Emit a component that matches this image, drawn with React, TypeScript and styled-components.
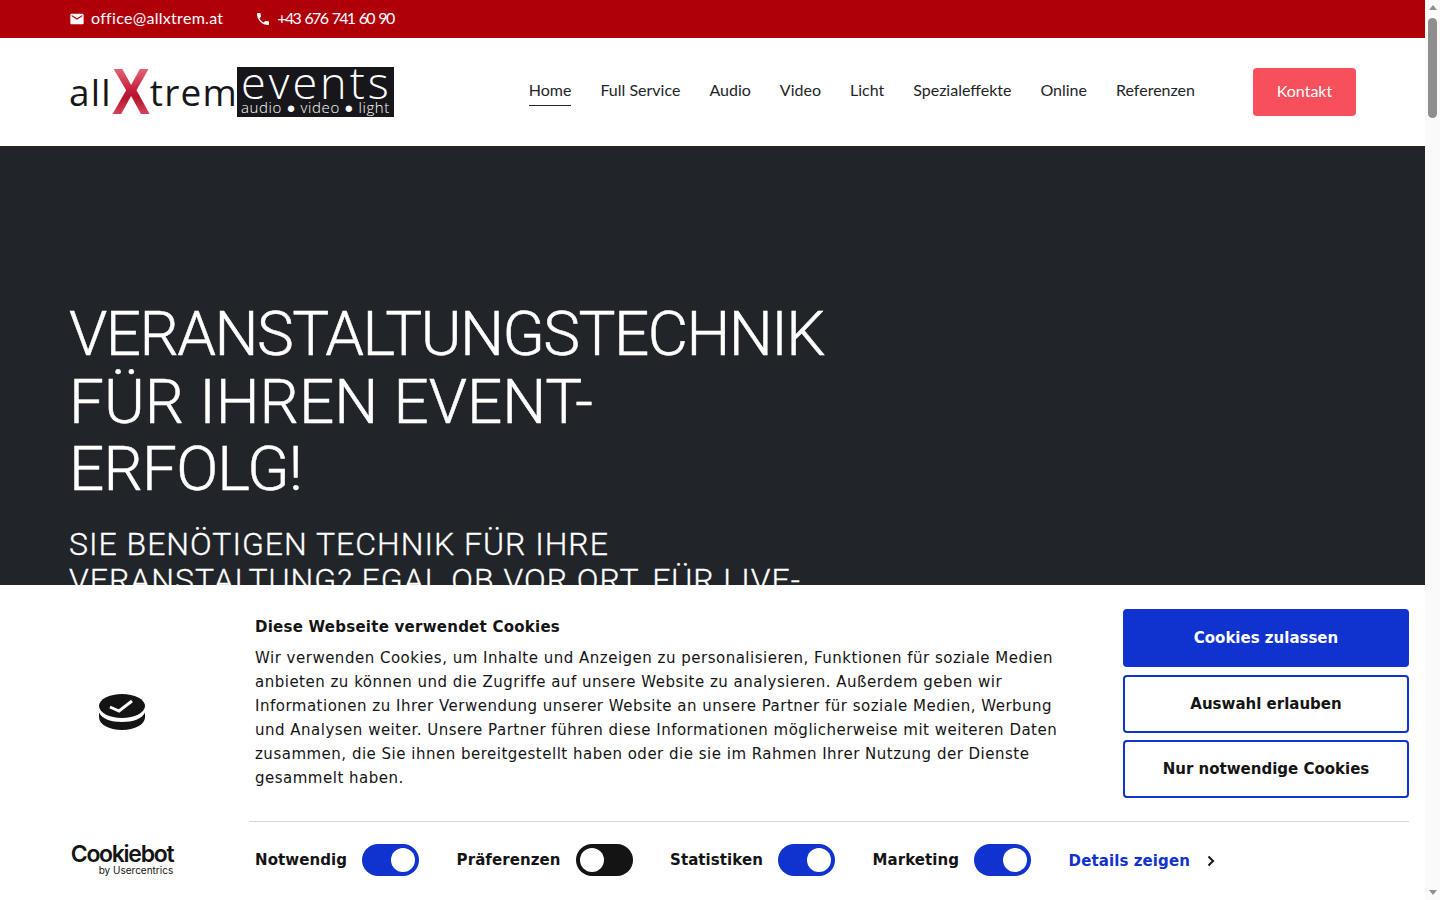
import { FC } from "react";
import styled, { createGlobalStyle } from "styled-components";
import { MdEmail, MdPhone } from "react-icons/md";

const BLUE = "#1032cf";
const INK = "#141414";
const PAGE_FONT = '"Lato", "Open Sans", sans-serif';
const HERO_FONT = '"Roboto", "Open Sans", sans-serif';
const COOKIE_FONT = '"DejaVu Sans", Verdana, sans-serif';

const GlobalStyle = createGlobalStyle`
    body {
        margin: 0;
        background: #fff;
        color: #212529;
        font-family: ${PAGE_FONT};
    }
`;

const Page = styled.div`
    display: flex;
    flex-direction: column;
    height: 100vh;
    margin-right: 15px;
    overflow: hidden;
`;

const TopBar = styled.div`
    display: flex;
    flex: none;
    align-items: center;
    gap: 32px;
    height: 38px;
    padding: 0 69px;
    background: #af0009;
    color: #fff;
    font-size: 16px;
`;

const TopItem = styled.a<{ $tracking: number; $wordGap?: number }>`
    display: flex;
    align-items: center;
    gap: 6px;
    color: #fff;
    letter-spacing: ${({ $tracking }) => $tracking}px;
    word-spacing: ${({ $wordGap }) => $wordGap ?? 0}px;

    span {
        margin-top: -3px;
    }

    svg {
        width: 16px;
        height: 16px;
    }
`;

const Header = styled.header`
    display: flex;
    flex: none;
    align-items: center;
    justify-content: space-between;
    height: 108px;
    padding: 0 69px;
    background: #fff;
`;

const Logo = styled.div`
    display: flex;
    align-items: center;
    height: 50px;
`;

const LogoWord = styled.span`
    font-family: "Open Sans", sans-serif;
    font-size: 37px;
    font-weight: 500;
    line-height: 50px;
    letter-spacing: 1.2px;
    color: #17171b;
`;

const LogoX = styled.span`
    display: inline-block;
    width: 43px;
    height: 50px;
    margin-right: -5px;
    transform: scaleX(0.88);
    transform-origin: left center;
    font-family: "Liberation Sans", sans-serif;
    font-size: 65px;
    font-weight: 700;
    line-height: 50px;
    background: linear-gradient(180deg, #e56a7c 0%, #c6203c 45%, #b3142d 60%, #dc4a62 100%);
    -webkit-background-clip: text;
    background-clip: text;
    color: transparent;
`;

const LogoBox = styled.div`
    display: flex;
    flex-direction: column;
    width: 157px;
    height: 50px;
    margin-left: -1px;
    padding-left: 4px;
    box-sizing: border-box;
    background: #17171b;
    color: #fff;
    font-family: "Open Sans", sans-serif;
    font-weight: 300;
`;

const LogoEvents = styled.span`
    font-size: 45px;
    line-height: 29px;
    letter-spacing: 3px;
`;

const LogoSub = styled.span`
    margin-top: 2px;
    font-size: 15px;
    line-height: 19px;
    letter-spacing: 0.6px;
    white-space: nowrap;
`;

const NavArea = styled.div`
    display: flex;
    align-items: center;
    gap: 58px;
`;

const Nav = styled.nav`
    display: flex;
    align-items: center;
    gap: 29px;
`;

const NavLink = styled.a<{ $active?: boolean }>`
    padding: 4px 0 3px;
    margin-top: -5px;
    font-size: 16px;
    line-height: 24px;
    color: #212529;
    border-bottom: 1px solid ${({ $active }) => ($active ? "#212529" : "transparent")};
`;

const ContactButton = styled.a`
    display: flex;
    align-items: center;
    justify-content: center;
    width: 103px;
    height: 45px;
    padding-bottom: 3px;
    border-radius: 4px;
    background: #f74f5c;
    color: #fff;
    font-size: 16px;
`;

const Hero = styled.section`
    flex: 1;
    padding: 154px 69px 0;
    background: #212529;
    color: #fff;
    font-family: ${HERO_FONT};
`;

const HeroTitle = styled.h1`
    display: flex;
    flex-direction: column;
    margin: 0 0 23px;
    font-size: 62px;
    font-weight: 300;
    line-height: 67.5px;
    -webkit-text-stroke: 0.5px #fff;
`;

const HeroLine = styled.span<{ $tracking: number }>`
    letter-spacing: ${({ $tracking }) => $tracking}px;
`;

const HeroLead = styled.h2`
    max-width: 760px;
    margin: 0;
    font-size: 32px;
    font-weight: 300;
    line-height: 36px;
    letter-spacing: 1px;
    -webkit-text-stroke: 0.3px #fff;
`;

const Dialog = styled.div`
    position: fixed;
    left: 0;
    right: 15px;
    bottom: 0;
    display: flex;
    height: 315px;
    box-sizing: border-box;
    padding: 24px 16px 0 0;
    background: #fff;
    color: ${INK};
    font-family: ${COOKIE_FONT};
`;

const Brand = styled.div`
    display: flex;
    flex: 0 0 249px;
    flex-direction: column;
    align-items: center;
    justify-content: space-between;
    padding: 85px 5px 24px 0;
    box-sizing: border-box;
`;

const CookieIcon = styled.svg`
    width: 46px;
    height: 36px;
`;

const Wordmark = styled.div`
    display: flex;
    flex-direction: column;
    align-items: flex-end;
    font-family: "Inter", sans-serif;
    color: #141414;
`;

const WordmarkMain = styled.span`
    font-size: 23px;
    font-weight: 600;
    line-height: 22px;
    letter-spacing: -1.3px;
`;

const WordmarkSub = styled.span`
    margin-top: -1px;
    font-size: 10px;
    line-height: 12px;
`;

const Main = styled.div`
    display: flex;
    flex: 1;
    flex-direction: column;
    min-width: 0;
`;

const TopRow = styled.div`
    display: flex;
    justify-content: space-between;
    padding-bottom: 23px;
    border-bottom: 1px solid #d6d6d6;
`;

const Copy = styled.div`
    width: 810px;
    padding: 8px 0 0 6px;
`;

const CopyTitle = styled.div`
    margin-bottom: 9px;
    font-size: 15px;
    font-weight: 700;
    line-height: 20px;
    letter-spacing: 0.25px;
`;

const CopyBody = styled.p`
    margin: 0;
    font-size: 15px;
    line-height: 24px;
    letter-spacing: 0.5px;
`;

const Actions = styled.div`
    display: flex;
    flex: 0 0 286px;
    flex-direction: column;
    gap: 7.5px;
`;

const ActionButton = styled.button<{ $primary?: boolean }>`
    height: 58px;
    border: 2px solid ${BLUE};
    border-radius: 4px;
    background: ${({ $primary }) => ($primary ? BLUE : "#fff")};
    color: ${({ $primary }) => ($primary ? "#fff" : INK)};
    font-family: ${COOKIE_FONT};
    font-size: 15px;
    font-weight: 700;
`;

const BottomRow = styled.div`
    display: flex;
    align-items: center;
    height: 32px;
    padding: 22px 0 0 6px;
`;

const Consent = styled.div`
    display: flex;
    align-items: center;
    gap: 15.25px;
    margin-right: 37.25px;
`;

const ConsentLabel = styled.span`
    margin-top: -1px;
    font-size: 15px;
    font-weight: 700;
    letter-spacing: 0.08px;
`;

const Toggle = styled.span<{ $on: boolean }>`
    display: flex;
    justify-content: ${({ $on }) => ($on ? "flex-end" : "flex-start")};
    width: 57px;
    height: 32px;
    padding: 4px;
    box-sizing: border-box;
    border-radius: 16px;
    background: ${({ $on }) => ($on ? BLUE : INK)};

    &::after {
        content: "";
        width: 24px;
        height: 24px;
        border-radius: 50%;
        background: #fff;
    }
`;

const DetailsLink = styled.a`
    display: flex;
    align-items: center;
    gap: 17px;
    margin-top: 1px;
    color: ${BLUE};
    font-size: 15px;
    font-weight: 700;
    letter-spacing: 0.1px;
`;

const ScrollRail = styled.div`
    position: fixed;
    top: 0;
    right: 0;
    bottom: 0;
    display: flex;
    flex-direction: column;
    align-items: center;
    width: 15px;
    padding: 5px 0;
    box-sizing: border-box;
    background: #fafafa;
`;

const ScrollArrow = styled.span<{ $down?: boolean }>`
    width: 0;
    height: 0;
    border-left: 4.5px solid transparent;
    border-right: 4.5px solid transparent;
    ${({ $down }) => ($down ? "border-top: 5px solid #8f8f8f; margin-top: auto;" : "border-bottom: 5px solid #8f8f8f;")}
`;

const ScrollThumb = styled.span`
    width: 9px;
    height: 100px;
    margin-top: 8px;
    border-radius: 5px;
    background: #8f8f8f;
`;

const navItems = ["Home", "Full Service", "Audio", "Video", "Licht", "Spezialeffekte", "Online", "Referenzen"];

const consents = [
    { label: "Notwendig", on: true },
    { label: "Präferenzen", on: false },
    { label: "Statistiken", on: true },
    { label: "Marketing", on: true },
];

const CookieDialog: FC = () => (
    <Dialog>
        <Brand>
            <CookieIcon viewBox="0 0 46 36">
                <ellipse cx="23" cy="12" rx="23" ry="12" fill="#141414" />
                <path d="M0 18.5 C3 25 12 28 23 28 C34 28 43 25 46 18.5 L46 23 C46 30.5 36 36 23 36 C10 36 0 30.5 0 23 Z" fill="#141414" />
                <path d="M11 13 L20 17 L33 7" fill="none" stroke="#fff" strokeWidth="3" />
            </CookieIcon>
            <Wordmark>
                <WordmarkMain>Cookiebot</WordmarkMain>
                <WordmarkSub>by Usercentrics</WordmarkSub>
            </Wordmark>
        </Brand>
        <Main>
            <TopRow>
                <Copy>
                    <CopyTitle>Diese Webseite verwendet Cookies</CopyTitle>
                    <CopyBody>
                        Wir verwenden Cookies, um Inhalte und Anzeigen zu personalisieren, Funktionen für soziale Medien
                        anbieten zu können und die Zugriffe auf unsere Website zu analysieren. Außerdem geben wir
                        Informationen zu Ihrer Verwendung unserer Website an unsere Partner für soziale Medien, Werbung
                        und Analysen weiter. Unsere Partner führen diese Informationen möglicherweise mit weiteren Daten
                        zusammen, die Sie ihnen bereitgestellt haben oder die sie im Rahmen Ihrer Nutzung der Dienste
                        gesammelt haben.
                    </CopyBody>
                </Copy>
                <Actions>
                    <ActionButton $primary>Cookies zulassen</ActionButton>
                    <ActionButton>Auswahl erlauben</ActionButton>
                    <ActionButton>Nur notwendige Cookies</ActionButton>
                </Actions>
            </TopRow>
            <BottomRow>
                {consents.map(({ label, on }) => (
                    <Consent key={label}>
                        <ConsentLabel>{label}</ConsentLabel>
                        <Toggle $on={on} />
                    </Consent>
                ))}
                <DetailsLink>
                    Details zeigen
                    <svg width="8" height="12" viewBox="0 0 8 12">
                        <path d="M1.5 1.5 L6 6 L1.5 10.5" fill="none" stroke={INK} strokeWidth="2" />
                    </svg>
                </DetailsLink>
            </BottomRow>
        </Main>
    </Dialog>
);

const App: FC = () => (
    <>
        <GlobalStyle />
        <Page>
            <TopBar>
                <TopItem $tracking={0.3}><MdEmail /><span>office@allxtrem.at</span></TopItem>
                <TopItem $tracking={-1.7} $wordGap={2}><MdPhone /><span>+43 676 741 60 90</span></TopItem>
            </TopBar>
            <Header>
                <Logo>
                    <LogoWord>all</LogoWord>
                    <LogoX>X</LogoX>
                    <LogoWord>trem</LogoWord>
                    <LogoBox>
                        <LogoEvents>events</LogoEvents>
                        <LogoSub>audio ● video ● light</LogoSub>
                    </LogoBox>
                </Logo>
                <NavArea>
                    <Nav>
                        {navItems.map((item, i) => (
                            <NavLink key={item} $active={i === 0}>{item}</NavLink>
                        ))}
                    </Nav>
                    <ContactButton>Kontakt</ContactButton>
                </NavArea>
            </Header>
            <Hero>
                <HeroTitle>
                    <HeroLine $tracking={-1.55}>VERANSTALTUNGSTECHNIK</HeroLine>
                    <HeroLine $tracking={0}>FÜR IHREN EVENT-</HeroLine>
                    <HeroLine $tracking={-0.8}>ERFOLG!</HeroLine>
                </HeroTitle>
                <HeroLead>
                    SIE BENÖTIGEN TECHNIK FÜR IHRE VERANSTALTUNG? EGAL OB VOR ORT, FÜR LIVE-STREAMING ODER HYBRID.
                </HeroLead>
            </Hero>
        </Page>
        <CookieDialog />
        <ScrollRail>
            <ScrollArrow />
            <ScrollThumb />
            <ScrollArrow $down />
        </ScrollRail>
    </>
);

export default App;
